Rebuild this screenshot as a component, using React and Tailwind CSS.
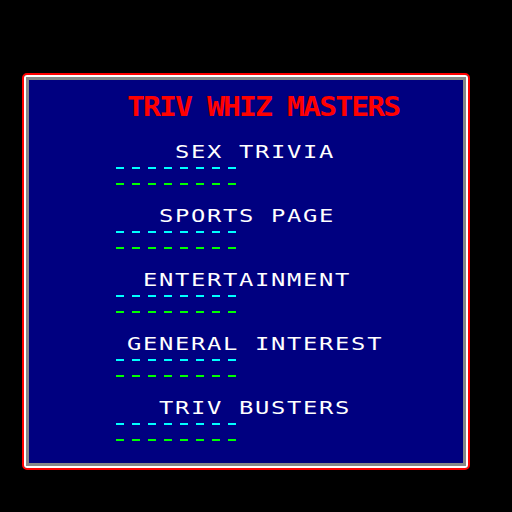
import React from 'react';

const categories = [
    { name: 'SEX TRIVIA', offset: 'ml-[146px]' },
    { name: 'SPORTS PAGE', offset: 'ml-[130px]' },
    { name: 'ENTERTAINMENT', offset: 'ml-[114px]' },
    { name: 'GENERAL INTEREST', offset: 'ml-[98px]' },
    { name: 'TRIV BUSTERS', offset: 'ml-[130px]' },
];

// Row of eight dashes, one per character cell
const Dashes = ({ color }) => (
    <div className="flex gap-2 ml-[87px]">
        {Array.from({ length: 8 }).map((_, i) => (
            <div key={i} className={`w-2 h-[2px] ${color}`} />
        ))}
    </div>
);

const Category = ({ name, offset }) => (
    <div className="h-[64px]">
        <div
            className={`${offset} origin-left scale-x-[1.4] text-white text-[17px] leading-[17px] tracking-[1.2px] whitespace-pre`}
        >
            {name}
        </div>
        <div className="mt-[6px]">
            <Dashes color="bg-[#00ffff]" />
        </div>
        <div className="mt-[14px]">
            <Dashes color="bg-[#00ff00]" />
        </div>
    </div>
);

export default function App() {
    return (
        <div
            className="w-[512px] h-[512px] bg-black pt-[73px] pl-[22px] overflow-hidden"
            style={{ fontFamily: '"DejaVu Sans Mono", monospace' }}
        >
            {/* Triple frame: red, white, gray */}
            <div className="w-[448px] h-[397px] border-2 border-[#ff0000] rounded-[5px]">
                <div className="w-full h-full border-2 border-white rounded-[3px]">
                    <div className="w-full h-full border-[3px] border-[#888888]">
                        <div className="w-full h-full bg-[#000080]">
                            <div className="h-[64px] pt-[13px]">
                                <div className="ml-[98px] origin-left scale-x-[1.1] text-[#ff0000] font-bold text-[27px] leading-[28px] tracking-[-1.7px] whitespace-pre">
                                    TRIV WHIZ MASTERS
                                </div>
                            </div>
                            {categories.map((c) => (
                                <Category key={c.name} name={c.name} offset={c.offset} />
                            ))}
                        </div>
                    </div>
                </div>
            </div>
        </div>
    );
}
